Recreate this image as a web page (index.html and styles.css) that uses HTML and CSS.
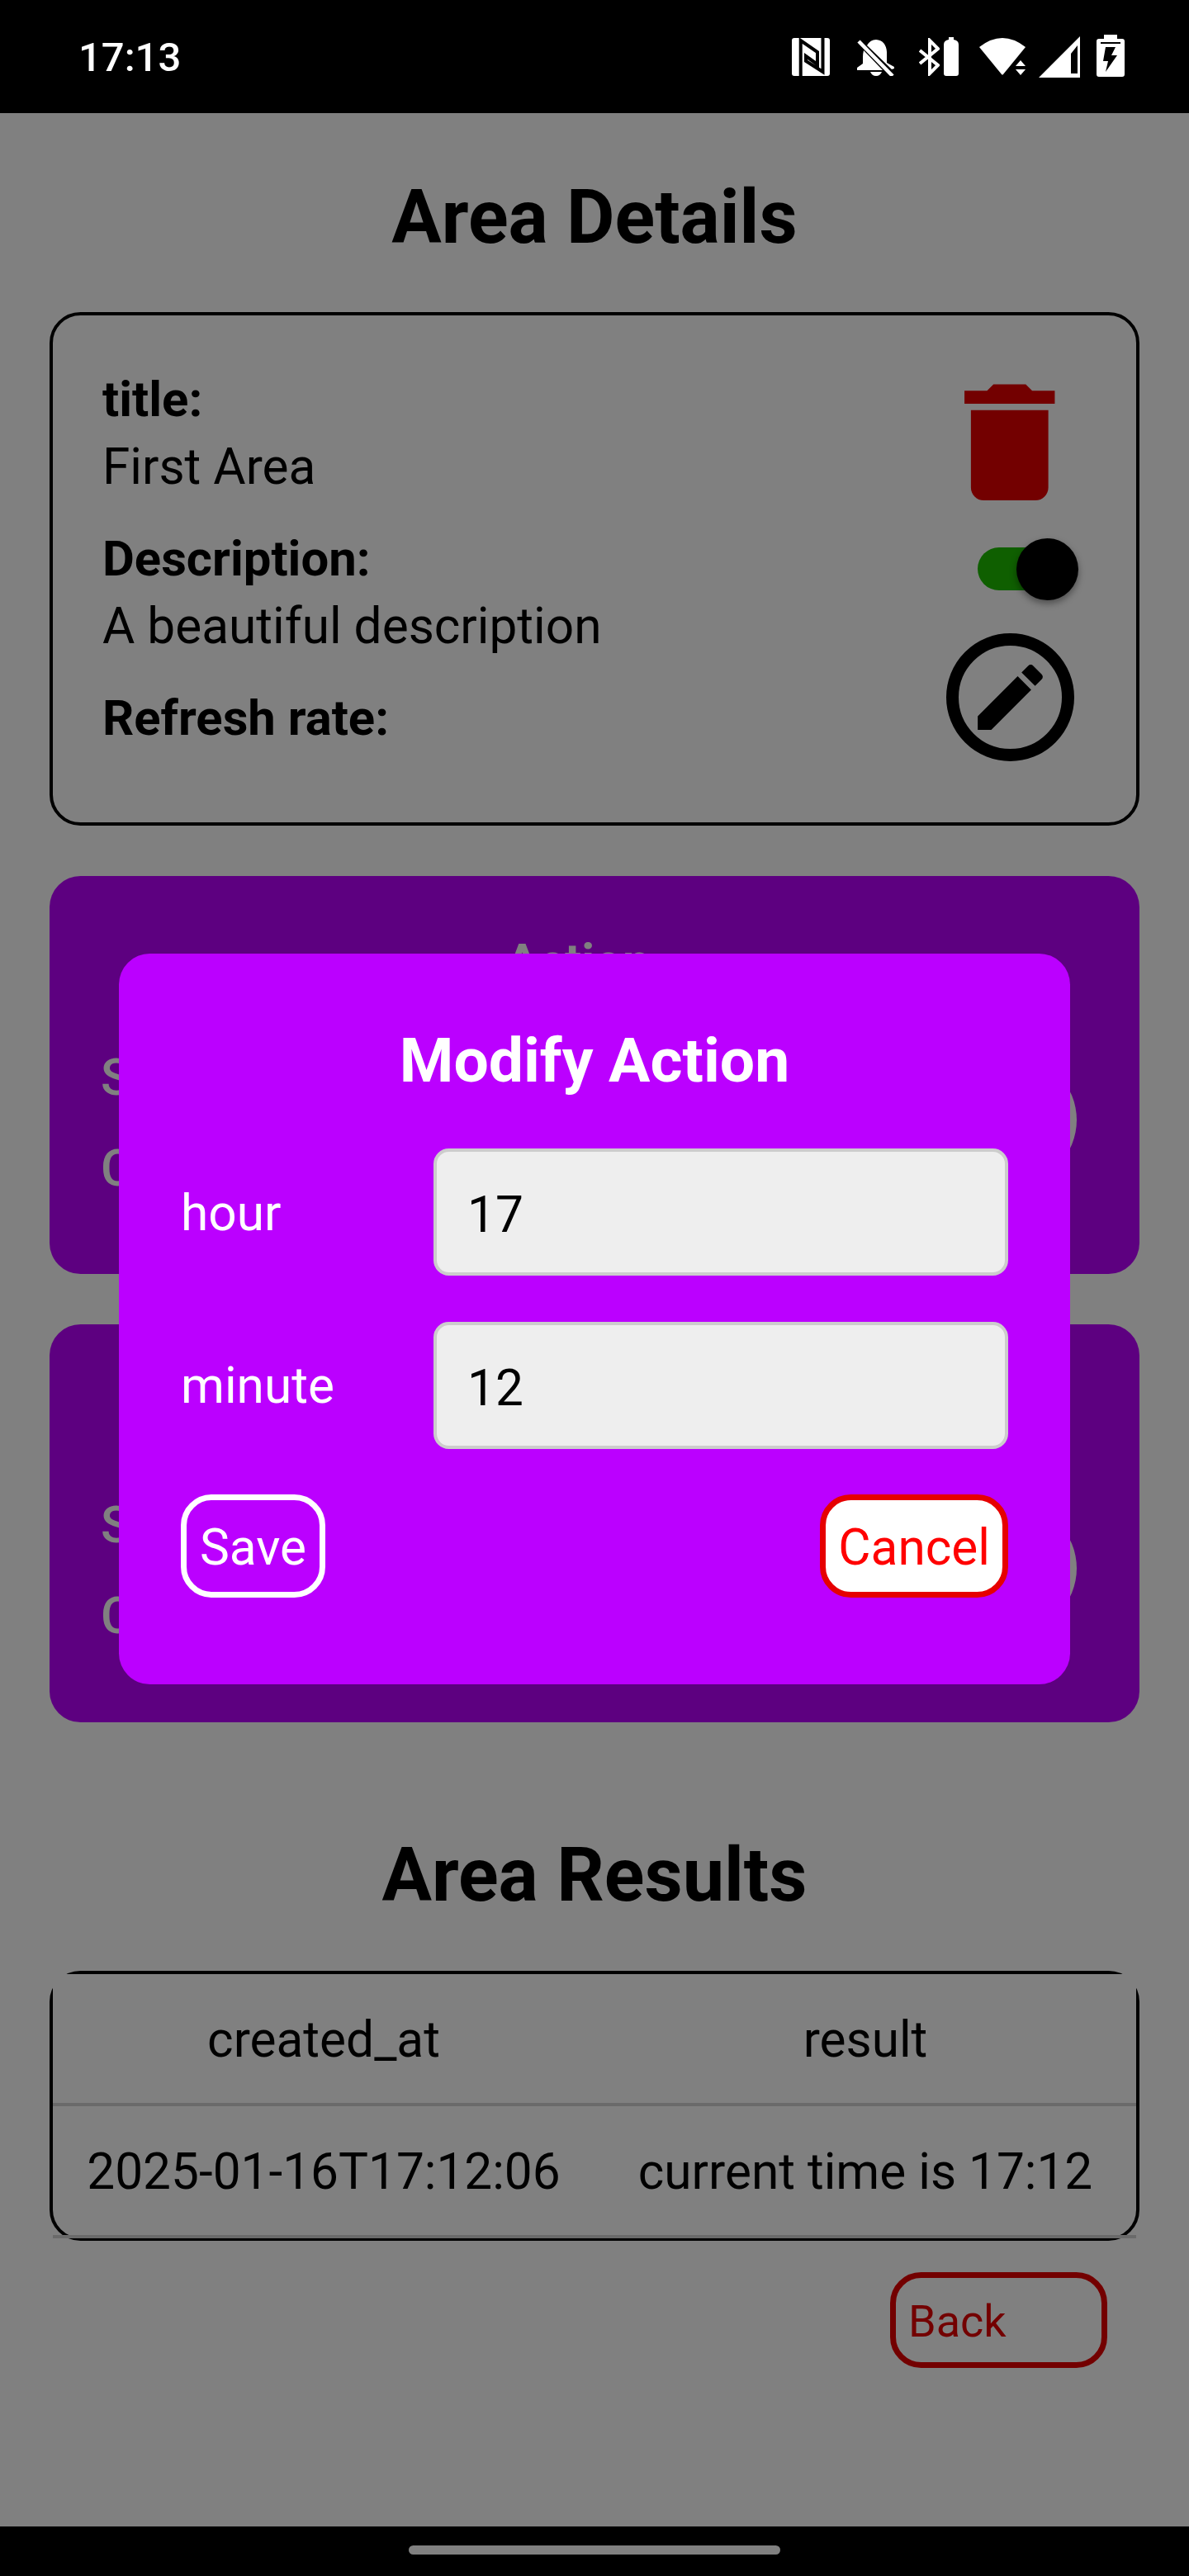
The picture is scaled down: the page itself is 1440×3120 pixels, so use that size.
FILE: index.html
```html
<!DOCTYPE html>
<html lang="en">
<head>
<meta charset="utf-8">
<title>Area Details</title>
<link rel="stylesheet" href="styles.css">
</head>
<body>
<div class="status">
  <span class="clock">17:13</span>
  <div class="status-icons">
    <svg class="si si-nfc" viewBox="0 0 46 46"><rect width="46" height="46" rx="3" fill="#fff"/><path fill="none" stroke="#000" stroke-width="4" d="M10.7 46V3L31 17V32L17 22V28L37.5 41V0"/></svg>
    <svg class="si si-bell" viewBox="0 0 45 44"><path fill="#fff" d="M8 13Q7 17 7 21V29L0 34V37H31ZM12 7Q16 0 23 0Q35 1 36 15V28L45 33V35L42 36ZM16 39H30Q28 44 23 44Q18 44 16 39Z"/><path stroke="#fff" stroke-width="4.5" d="M2 2L43 44"/></svg>
    <svg class="si si-bt" viewBox="0 0 25 46"><path fill="none" stroke="#fff" stroke-width="4" d="M1 15L23 33L13 43V3L23 13L1 31"/></svg>
    <svg class="si si-vib" viewBox="0 0 18 47"><path fill="#fff" d="M6 0H12V3Q18 4 18 9V44Q18 47 15 47H3Q0 47 0 44V9Q0 4 6 3Z"/></svg>
    <svg class="si si-wifi" viewBox="0 0 56 45"><path fill="#fff" d="M0 11Q28 -11 56 11L29 44Q28 45 27 44Z"/><path fill="#fff" d="M50 27L44 34H56ZM44 38H56L50 45Z"/></svg>
    <svg class="si si-sig" viewBox="0 0 50 50"><path fill="#fff" fill-rule="evenodd" d="M50 0V50H0ZM47 11L39 21V45H47Z"/></svg>
    <svg class="si si-bat" viewBox="0 0 34 51"><path fill="#fff" fill-rule="evenodd" d="M9 0H25V5H31Q34 5 34 8V48Q34 51 31 51H3Q0 51 0 48V8Q0 5 3 5H9ZM5 9V11H29V9ZM11 15L8 32H14L11 45L25 25H18L23 15Z"/></svg>
  </div>
</div>

<main class="screen">
  <h1 class="page-title">Area Details</h1>

  <section class="card">
    <div class="card-text">
      <div class="field"><b>title:</b><span>First Area</span></div>
      <div class="field"><b>Description:</b><span>A beautiful description</span></div>
      <div class="field"><b>Refresh rate:</b></div>
    </div>
    <div class="card-actions">
      <svg class="trash" viewBox="0 0 24 24"><path d="M6 19c0 1.1.9 2 2 2h8c1.1 0 2-.9 2-2V7H6v12zM19 4h-3.5l-1-1h-5l-1 1H5v2h14V4z"/></svg>
      <div class="toggle"><span class="track"></span><span class="thumb"></span></div>
      <div class="edit"><svg viewBox="0 0 24 24"><path d="M3 17.25V21h3.75L17.81 9.94l-3.75-3.75L3 17.25zM20.71 7.04c.39-.39.39-1.02 0-1.41l-2.34-2.34c-.39-.39-1.02-.39-1.41 0l-1.83 1.83 3.75 3.75 1.83-1.83z"/></svg></div>
    </div>
  </section>

  <section class="purple purple-first">
    <div class="purple-title">Action</div>
    <div class="purple-body">
      <div class="purple-text"><b>Service</b><b>Config</b></div>
      <span class="purple-btn"></span>
    </div>
  </section>

  <section class="purple purple-second">
    <div class="purple-body">
      <div class="purple-text thin"><b>Service</b><b>Config</b></div>
      <span class="purple-btn"></span>
    </div>
  </section>

  <h2 class="page-title results-title">Area Results</h2>

  <div class="table">
    <div class="row head"><span class="c1">created_at</span><span class="c2">result</span></div>
    <div class="row"><span class="c1">2025-01-16T17:12:06</span><span class="c2">current time is 17:12</span></div>
  </div>

  <div class="back-wrap"><a class="back">Back</a></div>
</main>

<div class="navbar"><span class="pill"></span></div>

<div class="modal">
  <h3 class="modal-title">Modify Action</h3>
  <div class="form-row"><label>hour</label><div class="input">17</div></div>
  <div class="form-row"><label>minute</label><div class="input">12</div></div>
  <div class="modal-btns">
    <button class="btn save">Save</button>
    <button class="btn cancel">Cancel</button>
  </div>
</div>
</body>
</html>
```

FILE: styles.css
```css
* { box-sizing: border-box; }
html, body { margin: 0; padding: 0; }
html { height: 3120px; overflow: hidden; }
body {
  position: relative;
  width: 1440px;
  height: 3120px;
  overflow: hidden;
  background: #808080;
  font-family: Roboto, "Liberation Sans", sans-serif;
  font-size: 60.35px;
  color: #000;
  display: flex;
  flex-direction: column;
}
.status {
  height: 137px;
  background: #000;
  display: flex;
  align-items: flex-start;
  justify-content: space-between;
  padding: 0 78px 0 95px;
}
.clock {
  color: #fff;
  font-size: 49px;
  font-weight: 500;
  line-height: 57px;
  margin-top: 41px;
}
.status-icons { display: flex; align-items: flex-start; margin-top: 42px; }
.si { display: block; flex: none; }
.si-nfc { width: 46px; height: 46px; margin-top: 4px; }
.si-bell { width: 45px; height: 44px; margin-top: 6px; margin-left: 33px; }
.si-bt { width: 25px; height: 46px; margin-top: 4px; margin-left: 30px; }
.si-vib { width: 18px; height: 47px; margin-top: 3px; margin-left: 5px; }
.si-wifi { width: 56px; height: 45px; margin-top: 4px; margin-left: 25px; }
.si-sig { width: 50px; height: 50px; margin-top: 2px; margin-left: 16px; }
.si-bat { width: 34px; height: 51px; margin-left: 20px; }

.screen { flex: 1; padding: 0 60px; display: flex; flex-direction: column; }
.page-title {
  margin: 0;
  text-align: center;
  font-size: 90px;
  font-weight: 700;
  line-height: 106px;
}
h1.page-title { padding-top: 74px; height: 241px; }

.card {
  height: 622px;
  border: 4px solid #000;
  border-radius: 37.5px;
  padding: 62px 58px 0 60px;
  display: flex;
  justify-content: space-between;
}
.field { display: flex; flex-direction: column; line-height: 81px; margin-bottom: 31px; height: 162px; }
.field b { font-weight: 700; font-size: 59.8px; }
.field:last-child { height: 81px; }
.card-actions { display: flex; flex-direction: column; align-items: center; width: 190px; margin-top: -2.5px; }
.trash { width: 187.5px; height: 187.5px; fill: #730000; display: block; flex: none; margin-bottom: 23px; }
.toggle { position: relative; width: 122px; height: 75px; flex: none; margin-left: 44px; }
.track { position: absolute; left: 0; top: 11px; width: 105px; height: 52px; border-radius: 26px; background: #0f5f00; }
.thumb { position: absolute; right: 0; top: 0; width: 75px; height: 75px; border-radius: 50%; background: #000; box-shadow: 0 4px 8px rgba(0,0,0,.4); }
.edit {
  width: 155px; height: 155px; border: 15px solid #000; border-radius: 50%;
  display: flex; align-items: center; justify-content: center; margin-top: 39.5px; flex: none;
}
.edit svg { width: 105px; height: 105px; fill: #000; display: block; flex: none; }

.purple {
  background: #5d0080;
  border-radius: 37.5px;
  color: #808080;
  padding: 0 76px 0 62px;
  height: 482px;
  margin-top: 61px;
}
.purple-title { font-size: 60px; font-weight: 700; text-align: center; line-height: 80px; padding-top: 64px; padding-right: 26px; height: 150px; }
.purple-second .purple-body { padding-top: 150px; }
.purple-body { display: flex; justify-content: space-between; align-items: flex-start; }
.purple-text { display: flex; flex-direction: column; line-height: 70px; padding-top: 60px; gap: 40px; }
.purple-text b { font-weight: 500; }
.purple-text.thin { padding-top: 59px; }
.purple-btn { display: block; width: 155px; height: 155px; border-radius: 50%; background: #808080; margin-top: 67.5px; flex: none; }

.results-title { margin-top: 136px; height: 165px; line-height: 100px; }

.table { border: 4px solid #000; border-radius: 37.5px; height: 327px; width: 1320px; }
.row { display: flex; height: 160px; align-items: center; padding-top: 3px; border-bottom: 4px solid #6a6a6a; }
.row.head { background: #808080; }
.c1 { width: 656px; text-align: center; flex: none; }
.c2 { flex: 1; text-align: center; }

.back-wrap { display: flex; justify-content: flex-end; padding-right: 39px; margin-top: 38px; }
.back {
  width: 263px; height: 116px; border: 7.5px solid #730000; border-radius: 37.5px;
  color: #730000; padding-left: 15px; font-size: 54px; line-height: 106px;
}

.navbar { height: 60px; background: #000; display: flex; justify-content: center; padding-top: 23px; }
.pill { width: 450px; height: 11px; border-radius: 6px; background: #808080; display: block; }

.modal {
  position: absolute;
  left: 144px; top: 1155px;
  width: 1152px; height: 885px;
  background: #bb00ff;
  border-radius: 37.5px;
  padding: 75px;
  color: #fff;
}
.modal-title { margin: 10px 0 63px; height: 88px; text-align: center; font-size: 75px; line-height: 88px; font-weight: 700; }
.form-row { display: flex; align-items: center; height: 154px; margin-bottom: 55.5px; }
.form-row label { width: 306px; flex: none; line-height: 74px; padding-top: 3px; }
.input {
  flex: 1; height: 154px; background: #eee; border: 4px solid #ccc; border-radius: 18.75px;
  color: #000; padding-left: 37px; line-height: 153px;
}
.modal-btns { display: flex; justify-content: space-between; margin-top: 3px; }
.btn { font: inherit; height: 125px; padding: 5px 16px 0; border-radius: 37.5px; border: 7.5px solid #fff; background: transparent; color: #fff; line-height: 1; }
.btn.cancel { background: #fff; border-color: #e60000; color: #f00; padding: 5px 15px 0; }
```
